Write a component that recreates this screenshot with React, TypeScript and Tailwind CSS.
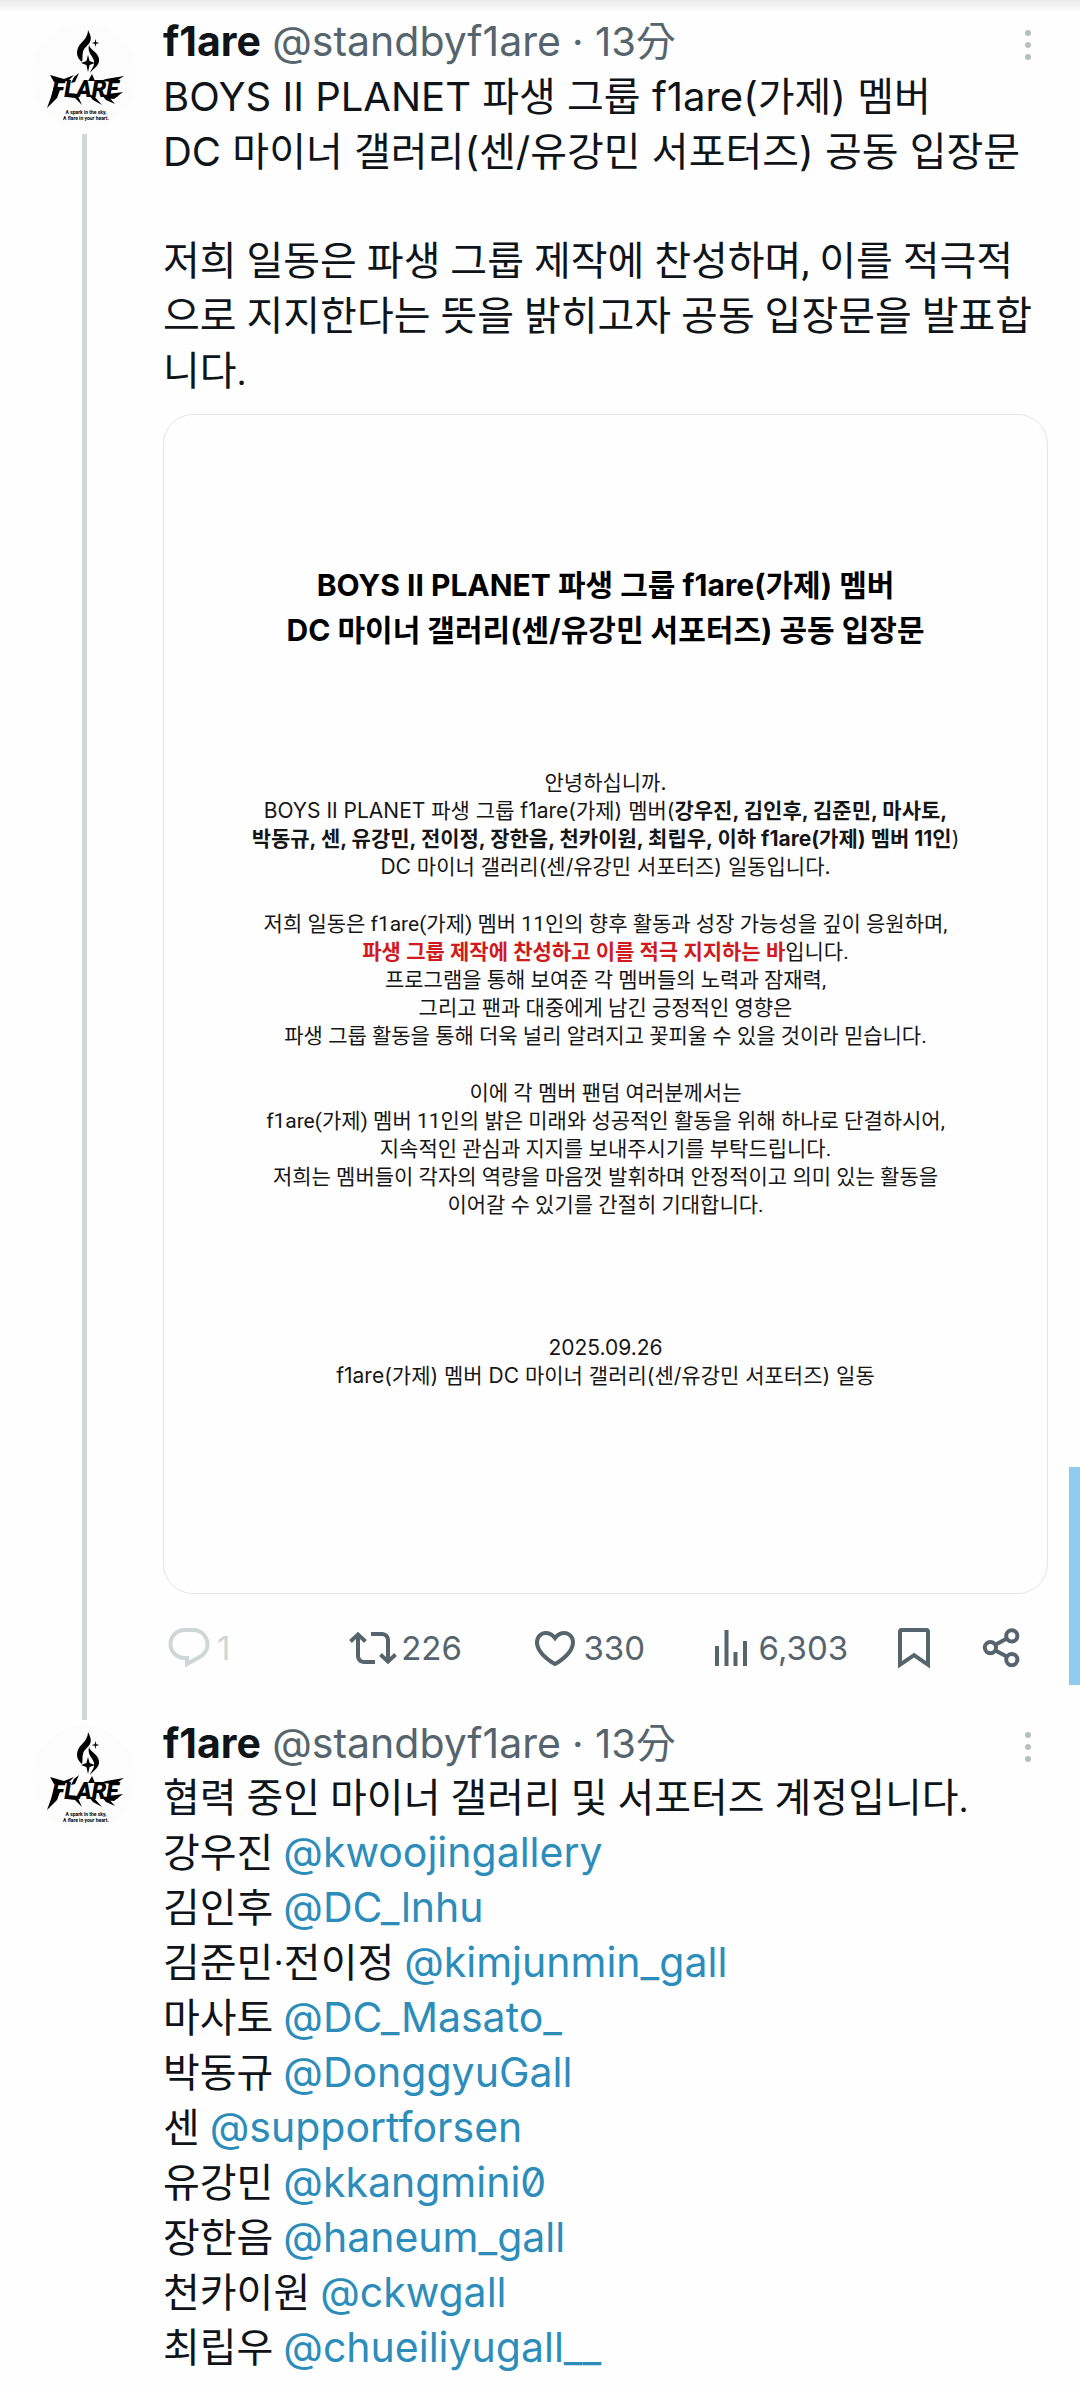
import type { ReactNode } from "react";

const ICONS = {
  reply:
    "M1.751 10c0-4.42 3.584-8 8.005-8h4.366c4.49 0 8.129 3.64 8.129 8.13 0 2.96-1.607 5.68-4.196 7.11l-8.054 4.46v-3.69h-.067c-4.49.1-8.183-3.51-8.183-8.01zm8.005-6c-3.317 0-6.005 2.69-6.005 6 0 3.37 2.77 6.08 6.138 6.01l.351-.01h1.761v2.3l5.087-2.81c1.951-1.08 3.163-3.13 3.163-5.36 0-3.39-2.744-6.13-6.129-6.13H9.756z",
  repost:
    "M4.5 3.88l4.432 4.14-1.364 1.46L5.5 7.55V16c0 1.1.896 2 2 2H13v2H7.5c-2.209 0-4-1.79-4-4V7.55L1.432 9.48.068 8.02 4.5 3.88zM16.5 6H11V4h5.5c2.209 0 4 1.79 4 4v8.45l2.068-1.93 1.364 1.46-4.432 4.14-4.432-4.14 1.364-1.46 2.068 1.93V8c0-1.1-.896-2-2-2z",
  like: "M16.697 5.5c-1.222-.06-2.679.51-3.89 2.16l-.805 1.09-.806-1.09C9.984 6.01 8.526 5.44 7.304 5.5c-1.243.07-2.349.78-2.91 1.91-.552 1.12-.633 2.78.479 4.82 1.074 1.97 3.257 4.27 7.129 6.61 3.87-2.34 6.052-4.64 7.126-6.61 1.111-2.04 1.03-3.7.477-4.82-.561-1.13-1.666-1.84-2.908-1.91zm4.187 7.69c-1.351 2.48-4.001 5.12-8.379 7.67l-.503.3-.504-.3c-4.379-2.55-7.029-5.19-8.382-7.67-1.36-2.5-1.41-4.86-.514-6.67.887-1.79 2.647-2.91 4.601-3.01 1.651-.09 3.368.56 4.798 2.01 1.429-1.45 3.146-2.1 4.796-2.01 1.954.1 3.714 1.22 4.601 3.01.896 1.81.846 4.17-.514 6.67z",
  views:
    "M8.75 21V3h2v18h-2zM18 21V8.5h2V21h-2zM4 21l.004-10h2L6 21H4zm9.248 0v-7h2v7h-2z",
  bookmark:
    "M4 3.7C4 2.76 4.76 2 5.7 2h12.6c.94 0 1.7.76 1.7 1.7v18.5l-8-5.4-8 5.4V3.7zM6 4v14.5l6-4.1 6 4.1V4H6z",
};

const ACCOUNTS = [
  { name: "강우진", handle: "@kwoojingallery" },
  { name: "김인후", handle: "@DC_lnhu" },
  { name: "김준민·전이정", handle: "@kimjunmin_gall" },
  { name: "마사토", handle: "@DC_Masato_" },
  { name: "박동규", handle: "@DonggyuGall" },
  { name: "센", handle: "@supportforsen" },
  { name: "유강민", handle: "@kkangmini0" },
  { name: "장한음", handle: "@haneum_gall" },
  { name: "천카이원", handle: "@ckwgall" },
  { name: "최립우", handle: "@chueiliyugall__" },
];

// Roboto only supplies the narrower word space here, the glyphs are Hangul
const HANGUL = "font-['Roboto','Noto_Sans_CJK_KR',sans-serif]";

function Icon({ d }: { d: string }) {
  return (
    <svg viewBox="0 0 24 24" className="size-12 shrink-0 fill-current" aria-hidden="true">
      <path d={d} />
    </svg>
  );
}

function ShareIcon() {
  return (
    <svg
      viewBox="0 0 24 24"
      className="size-12 shrink-0 fill-none stroke-current stroke-2"
      aria-hidden="true"
    >
      <circle cx="6.2" cy="11.8" r="2.8" />
      <circle cx="16.9" cy="5.9" r="2.8" />
      <circle cx="16.9" cy="17.8" r="2.8" />
      <path d="M8.7 10.4l5.7-3.1M8.7 13.2l5.7 3.1" />
    </svg>
  );
}

function Avatar() {
  return (
    <svg
      viewBox="0 0 104 104"
      className="size-[104px] shrink-0 rounded-full bg-[#fcfcfc]"
      role="img"
      aria-label="f1are"
    >
      {/* Flame */}
      <path d="M56 6c2 4 4 8 2 12-2 4-6 5-7 10-1 4 0 6-1 10-5-4-6-9-4-14 2-5 6-7 8-11 1-2 2-4 2-7z" />
      <path d="M57 21c1 5 9 7 10 14 1 6-5 9-9 14 1-4 5-7 4-12-1-5-7-8-5-16z" />
      <path d="M63.500 15l.8 3.200 3.200.8-3.200.8-.8 3.200-.8-3.200-3.200-.8 3.200-.8z" />
      <path d="M56 31l1.600 6 5.400 2-5.400 2-1.600 7-1.600-7-5.400-2 5.400-2z" />
      {/* Spikes around the wordmark */}
      <path d="M18 51l14 4 10-4-6 6-14 1zM22 62l6 4-3 8-10 10 4-11z" />
      <path d="M47 49l-4 9-4 1 3-6zM35 69l10 1 5 11-7-7-8-1zM60 50l3 7h-7z" />
      <path d="M56 70l6 2 8 9-9-5zM69 70l6 1 8 9-9-4zM92 52l-9 6-15-1 6-2zM91 68l-9 7-8-1 3-4z" />
      <text
        x="20"
        y="73"
        fontSize="23"
        fontWeight="900"
        fontStyle="italic"
        fontFamily="Roboto, sans-serif"
      >
        FLARE
      </text>
      <g fontSize="5" fontWeight="700" fontFamily="Roboto, sans-serif" textAnchor="middle">
        <text x="54" y="90">
          A spark in the sky,
        </text>
        <text x="54" y="96">
          A flare in your heart.
        </text>
      </g>
    </svg>
  );
}

function Post({ thread, children }: { thread?: boolean; children: ReactNode }) {
  return (
    <article className="flex gap-[27px] pr-8 pl-8">
      <div className="flex flex-col items-center gap-1.5 pt-2.5">
        <Avatar />
        {thread && <div className="-mb-1 w-[5px] flex-1 bg-[#d0d9d9]" />}
      </div>
      <div className="min-w-0 flex-1">
        <header className="flex h-[55px] items-center justify-between text-[#56646d]">
          <p>
            <a href="#profile" className="text-[41px] leading-[48px] font-bold text-[#0f1419]">
              f1are
            </a>{" "}
            <a href="#profile" className="text-[41px] leading-[48px]">
              @standbyf1are
            </a>{" "}
            · <time>13分</time>
          </p>
          <button
            type="button"
            aria-label="More"
            className="flex w-10 flex-col items-center gap-1.5 pt-1.5"
          >
            <span className="size-1.5 rounded-full bg-[#b7bfc3]" />
            <span className="size-1.5 rounded-full bg-[#b7bfc3]" />
            <span className="size-1.5 rounded-full bg-[#b7bfc3]" />
          </button>
        </header>
        {children}
      </div>
    </article>
  );
}

function Statement() {
  return (
    <section className="mt-[15px] rounded-[30px] border border-[#e3e6e7] pt-[148px] pb-[203px] text-center text-[21px] leading-7 text-[#161616]">
      <h2 className="text-[30px] leading-[45px] font-bold text-black">
        BOYS II PLANET 파생 그룹 f1are(가제) 멤버
        <br />
        DC 마이너 갤러리(센/유강민 서포터즈) 공동 입장문
      </h2>
      <div className="mt-[116px] flex flex-col gap-[29px]">
        <p>
          안녕하십니까.
          <br />
          BOYS II PLANET 파생 그룹 f1are(가제) 멤버(
          <b>
            강우진, 김인후, 김준민, 마사토,
            <br />
            박동규, 센, 유강민, 전이정, 장한음, 천카이원, 최립우, 이하 f1are(가제) 멤버 11인
          </b>
          )
          <br />
          DC 마이너 갤러리(센/유강민 서포터즈) 일동입니다.
        </p>
        <p className={HANGUL}>
          저희 일동은 f1are(가제) 멤버 11인의 향후 활동과 성장 가능성을 깊이 응원하며,
          <br />
          <b className="text-[#cf1a20]">파생 그룹 제작에 찬성하고 이를 적극 지지하는 바</b>
          입니다.
          <br />
          프로그램을 통해 보여준 각 멤버들의 노력과 잠재력,
          <br />
          그리고 팬과 대중에게 남긴 긍정적인 영향은
          <br />
          파생 그룹 활동을 통해 더욱 널리 알려지고 꽃피울 수 있을 것이라 믿습니다.
        </p>
        <p className={HANGUL}>
          이에 각 멤버 팬덤 여러분께서는
          <br />
          f1are(가제) 멤버 11인의 밝은 미래와 성공적인 활동을 위해 하나로 단결하시어,
          <br />
          지속적인 관심과 지지를 보내주시기를 부탁드립니다.
          <br />
          저희는 멤버들이 각자의 역량을 마음껏 발휘하며 안정적이고 의미 있는 활동을
          <br />
          이어갈 수 있기를 간절히 기대합니다.
        </p>
      </div>
      <p className="mt-[115px]">
        2025.09.26
        <br />
        f1are(가제) 멤버 DC 마이너 갤러리(센/유강민 서포터즈) 일동
      </p>
    </section>
  );
}

function Actions() {
  return (
    <div className="mt-[30px] mb-11 grid grid-cols-[184fr_182fr_175fr_183fr_88fr_70fr] pl-0.5 text-[33px] leading-[48px] text-[#56646d]">
      <button type="button" aria-label="Reply" className="flex items-center gap-1 text-[#cfd6d6]">
        <Icon d={ICONS.reply} />1
      </button>
      <button type="button" aria-label="Repost" className="flex items-center gap-1">
        <Icon d={ICONS.repost} />
        226
      </button>
      <button type="button" aria-label="Like" className="flex items-center gap-1">
        <Icon d={ICONS.like} />
        330
      </button>
      <button type="button" aria-label="Views" className="flex items-center gap-1">
        <Icon d={ICONS.views} />
        6,303
      </button>
      <button type="button" aria-label="Bookmark">
        <Icon d={ICONS.bookmark} />
      </button>
      <button type="button" aria-label="Share">
        <ShareIcon />
      </button>
    </div>
  );
}

export default function App() {
  return (
    <main
      lang="ko"
      className="relative min-h-screen overflow-hidden bg-[#fefefe] pt-3.5 font-['Inter','Noto_Sans_CJK_KR',sans-serif] text-[40px] leading-[55px] text-[#0f1419]"
    >
      <div className="absolute inset-x-0 top-0 h-3 bg-linear-to-b from-[#e9e9e9] to-transparent" />
      <div className="absolute top-[1467px] right-0 h-[218px] w-[11px] bg-[#8eccee]" />

      <Post thread>
        <p className="mb-[55px]">
          BOYS II PLANET 파생 그룹 f1are(가제) 멤버
          <br />
          DC 마이너 갤러리(센/유강민 서포터즈) 공동 입장문
        </p>
        <p className={HANGUL}>
          저희 일동은 파생 그룹 제작에 찬성하며, 이를 적극적으로 지지한다는 뜻을 밝히고자 공동
          입장문을 발표합니다.
        </p>
        <Statement />
        <Actions />
      </Post>

      <Post>
        <p className={HANGUL}>협력 중인 마이너 갤러리 및 서포터즈 계정입니다.</p>
        <ul className={HANGUL}>
          {ACCOUNTS.map(({ name, handle }) => (
            <li key={handle}>
              {name}{" "}
              <a
                href="#profile"
                className="font-['Inter',sans-serif] text-[41px] leading-[48px] text-[#2c8dba] slashed-zero"
              >
                {handle}
              </a>
            </li>
          ))}
        </ul>
      </Post>
    </main>
  );
}
